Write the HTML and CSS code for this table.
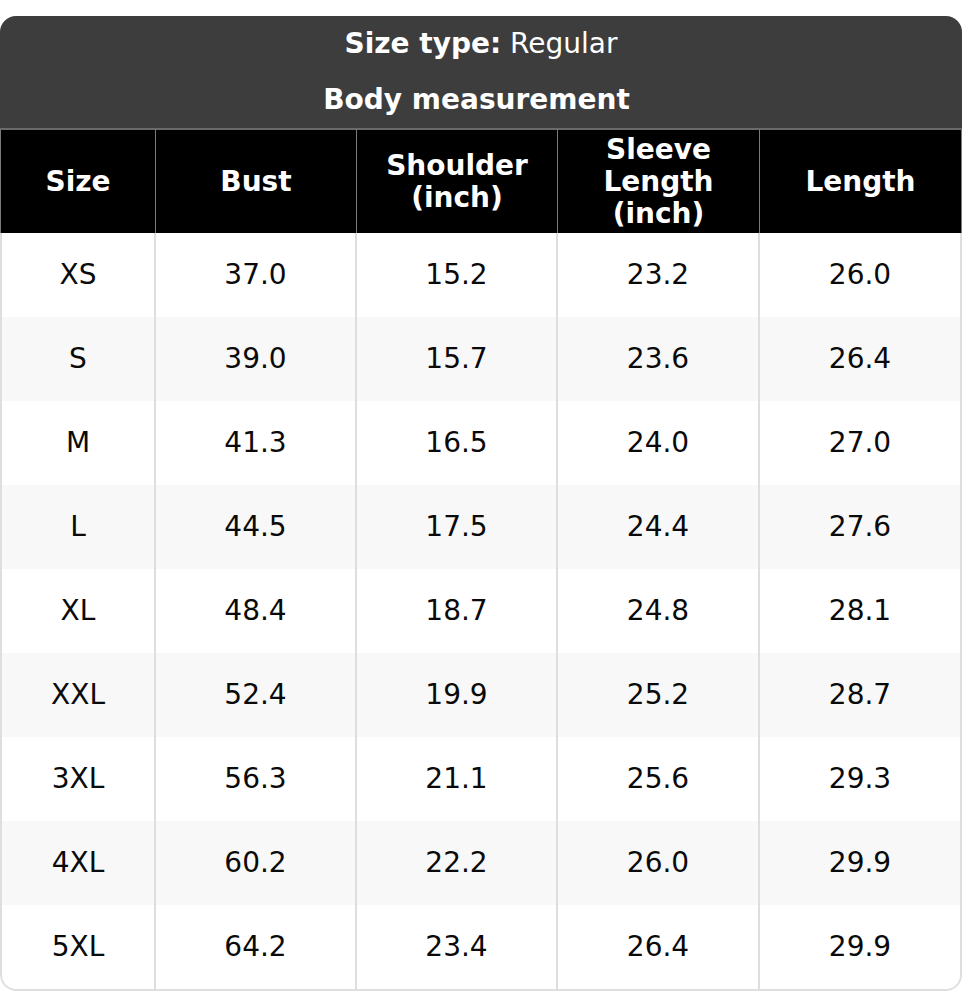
FILE: index.html
```html
<!DOCTYPE html>
<html lang="en">
<head>
<meta charset="utf-8">
<title>Size chart</title>
<link rel="stylesheet" href="styles.css">
</head>
<body>
<div class="chart">
  <div class="chart-head">
    <div class="chart-line"><b>Size type:</b> Regular</div>
    <div class="chart-line chart-line-sub"><b>Body measurement</b></div>
  </div>
  <table class="size-table">
    <colgroup>
      <col class="c-size"><col class="c-wide"><col class="c-wide"><col class="c-wide2"><col class="c-wide2">
    </colgroup>
    <thead>
      <tr>
        <th>Size</th>
        <th>Bust</th>
        <th>Shoulder<br>(inch)</th>
        <th>Sleeve<br>Length<br>(inch)</th>
        <th>Length</th>
      </tr>
    </thead>
    <tbody>
      <tr><td>XS</td><td>37.0</td><td>15.2</td><td>23.2</td><td>26.0</td></tr>
      <tr><td>S</td><td>39.0</td><td>15.7</td><td>23.6</td><td>26.4</td></tr>
      <tr><td>M</td><td>41.3</td><td>16.5</td><td>24.0</td><td>27.0</td></tr>
      <tr><td>L</td><td>44.5</td><td>17.5</td><td>24.4</td><td>27.6</td></tr>
      <tr><td>XL</td><td>48.4</td><td>18.7</td><td>24.8</td><td>28.1</td></tr>
      <tr><td>XXL</td><td>52.4</td><td>19.9</td><td>25.2</td><td>28.7</td></tr>
      <tr><td>3XL</td><td>56.3</td><td>21.1</td><td>25.6</td><td>29.3</td></tr>
      <tr><td>4XL</td><td>60.2</td><td>22.2</td><td>26.0</td><td>29.9</td></tr>
      <tr><td>5XL</td><td>64.2</td><td>23.4</td><td>26.4</td><td>29.9</td></tr>
    </tbody>
  </table>
</div>
</body>
</html>
```

FILE: styles.css
```css
html, body {
  margin: 0;
  padding: 0;
  background: #ffffff;
}

body {
  padding-top: 16px;
  font-family: "DejaVu Sans", Verdana, sans-serif;
  font-size: 28px;
  color: #0a0a0a;
}

.chart {
  width: 962px;
  border-radius: 16px;
  overflow: hidden;
}

.chart-head {
  background: #3d3d3d;
  color: #ffffff;
  border-bottom: 2px solid #6a6a6a;
}

.chart-line {
  text-align: center;
  line-height: 32px;
  padding: 12px 0;
}

.chart-line-sub {
  padding-right: 9px;
}

.chart-line b {
  font-weight: bold;
}

.size-table {
  width: 962px;
  table-layout: fixed;
  border-collapse: separate;
  border-spacing: 0;
}

.c-size { width: 156px; }
.c-wide { width: 201px; }
.c-wide2 { width: 202px; }

.size-table th {
  box-sizing: border-box;
  height: 103px;
  padding: 0 6px;
  background: #000000;
  color: #ffffff;
  font-weight: bold;
  line-height: 32px;
  text-align: center;
  vertical-align: middle;
  border-right: 1px solid #7a7a7a;
}

.size-table th:first-child {
  border-left: 1px solid #7a7a7a;
}

.size-table td {
  box-sizing: border-box;
  height: 84px;
  padding: 0;
  text-align: center;
  vertical-align: middle;
  line-height: 32px;
  border-right: 2px solid #dedede;
}

.size-table td:first-child {
  border-left: 2px solid #dedede;
}

.size-table tbody tr:nth-child(even) td {
  background: #f8f8f8;
}

.size-table tbody tr:last-child td {
  border-bottom: 2px solid #dedede;
  height: 86px;
}

.size-table tbody tr:last-child td:first-child {
  border-bottom-left-radius: 16px;
}

.size-table tbody tr:last-child td:last-child {
  border-bottom-right-radius: 16px;
}
```
